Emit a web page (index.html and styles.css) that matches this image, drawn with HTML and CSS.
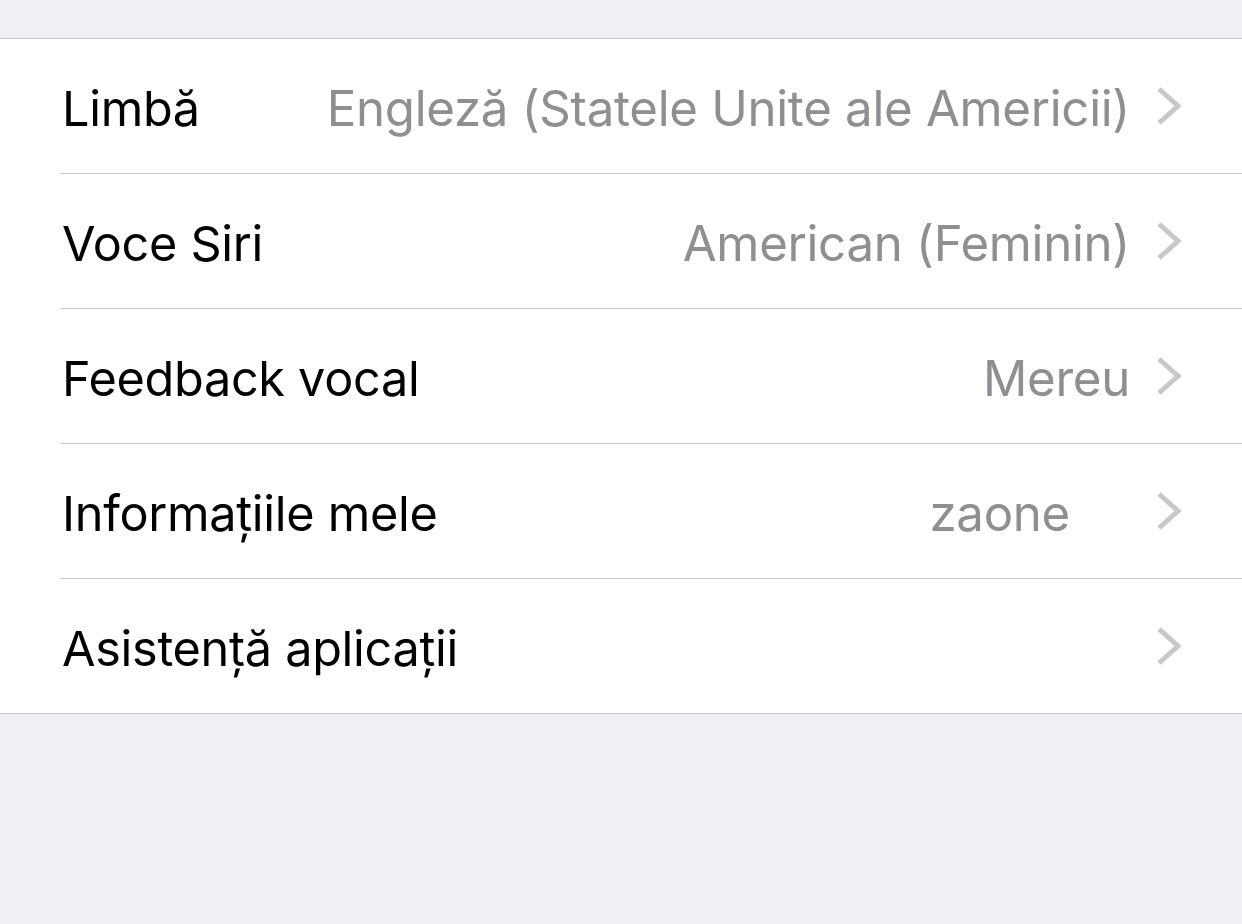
FILE: index.html
```html
<!DOCTYPE html>
<html lang="ro">
<head>
<meta charset="utf-8">
<link rel="stylesheet" href="styles.css">
</head>
<body>
<div class="page">
  <ul class="list">
    <li class="row">
      <span class="label">Limbă</span>
      <span class="value">Engleză (Statele Unite ale Americii)</span>
      <svg class="chev" viewBox="0 0 26 40" width="26" height="40"><polyline points="3,3 22,20 3,37" /></svg>
    </li>
    <li class="row">
      <span class="label">Voce Siri</span>
      <span class="value">American (Feminin)</span>
      <svg class="chev" viewBox="0 0 26 40" width="26" height="40"><polyline points="3,3 22,20 3,37" /></svg>
    </li>
    <li class="row">
      <span class="label">Feedback vocal</span>
      <span class="value">Mereu</span>
      <svg class="chev" viewBox="0 0 26 40" width="26" height="40"><polyline points="3,3 22,20 3,37" /></svg>
    </li>
    <li class="row">
      <span class="label">Informațiile mele</span>
      <span class="value value-pad">zaone</span>
      <svg class="chev" viewBox="0 0 26 40" width="26" height="40"><polyline points="3,3 22,20 3,37" /></svg>
    </li>
    <li class="row">
      <span class="label">Asistență aplicații</span>
      <span class="value"></span>
      <svg class="chev" viewBox="0 0 26 40" width="26" height="40"><polyline points="3,3 22,20 3,37" /></svg>
    </li>
  </ul>
</div>
</body>
</html>
```

FILE: styles.css
```css
html, body {
  margin: 0;
  padding: 0;
  background: #efeff4;
}
body {
  width: 1242px;
  height: 924px;
  overflow: hidden;
  font-family: Inter, "Noto Sans", "Liberation Sans", sans-serif;
}
.page {
  padding-top: 38px;
}
.list {
  list-style: none;
  margin: 0;
  padding: 0 0 0 60px;
  background: #fff;
  border-top: 1px solid #c8c7cc;
  border-bottom: 1px solid #c8c7cc;
}
.row {
  display: flex;
  align-items: center;
  height: 134px;
  padding-right: 60px;
  border-bottom: 1px solid #c8c7cc;
}
.row:last-child {
  border-bottom: none;
}
.label {
  font-size: 48.6px;
  color: #000;
  letter-spacing: -0.3px;
  white-space: nowrap;
  margin-left: 2px;
  padding-top: 4px;
}
.value {
  flex: 1;
  text-align: right;
  font-size: 49.2px;
  color: #8e8e93;
  letter-spacing: -0.3px;
  white-space: nowrap;
  margin-right: 26px;
  padding-top: 4px;
}
.value-pad {
  margin-right: 86px;
}
.chev {
  flex: none;
  display: block;
}
.chev polyline {
  fill: none;
  stroke: #c7c7cc;
  stroke-width: 5;
}
```
